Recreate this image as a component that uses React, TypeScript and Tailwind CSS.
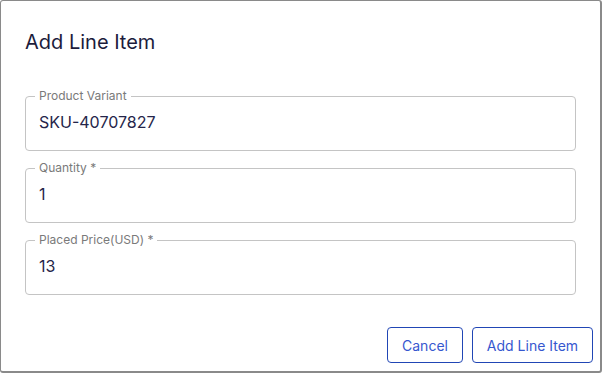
import { useState } from 'react';

interface FieldProps {
  label: string;
  value: string;
}

const OutlinedField = ({ label, value }: FieldProps) => {
  const [text, setText] = useState(value);
  return (
    <fieldset className="border border-[#c4c4c4] rounded-[4px] px-[9px] pb-[16px] min-w-0">
      <legend className="px-1 text-[12px] leading-[16px] text-[#7a7a7a]">{label}</legend>
      <input
        value={text}
        onChange={(e) => setText(e.target.value)}
        className="w-full px-1 pt-[6px] text-[16px] leading-[24px] text-[#25254a] outline-none bg-transparent"
      />
    </fieldset>
  );
};

export default function App() {
  return (
    <div className="w-[602px] h-[373px] bg-white" style={{ fontFamily: 'Inter, "Noto Sans", sans-serif' }}>
      <div className="w-full h-full border border-[#8a8a8a] border-r-2 border-b-2 rounded-[3px] flex flex-col">
        <h2 className="pl-[24px] pt-[27px] text-[20px] leading-[28px] text-[#1c1c3c]">Add Line Item</h2>

        <div className="px-[24px] pt-[32px] flex flex-col gap-[9px]">
          <OutlinedField label="Product Variant" value="SKU-40707827" />
          <OutlinedField label="Quantity *" value="1" />
          <OutlinedField label="Placed Price(USD) *" value="13" />
        </div>

        <div className="mt-auto flex justify-end gap-[9px] pr-[7px] pb-[8px]">
          <button className="h-[36px] w-[76px] border border-[#2146b5] rounded-[4px] text-[14px] text-[#3657cf]">
            Cancel
          </button>
          <button className="h-[36px] w-[121px] border border-[#2146b5] rounded-[4px] text-[14px] text-[#3657cf]">
            Add Line Item
          </button>
        </div>
      </div>
    </div>
  );
}
